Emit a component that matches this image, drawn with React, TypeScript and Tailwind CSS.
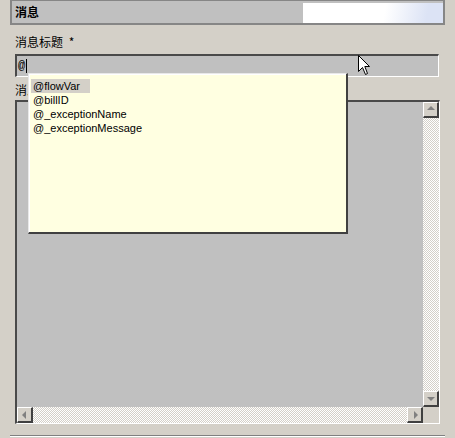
import React from "react";

const cjk = { fontFamily: '"Noto Sans CJK SC", "Liberation Sans", sans-serif' };
const latin = { fontFamily: '"Liberation Sans", Arial, sans-serif' };

function Arrow({ dir }: { dir: "up" | "down" | "left" | "right" }) {
  const pts = {
    up: "4,8 8,4 12,8",
    down: "4,6 12,6 8,10",
    left: "9,4 9,12 5,8",
    right: "7,4 7,12 11,8",
  }[dir];
  return (
    <svg width="12" height="12" viewBox="2 2 12 12">
      <polygon points={pts} fill="#808080" />
    </svg>
  );
}

function SBtn({ dir }: { dir: "up" | "down" | "left" | "right" }) {
  return (
    <div className="w-[16px] h-[16px] flex items-center justify-center bg-[#d4d0c8] border-t border-l border-t-white border-l-white border-b-2 border-r-2 border-b-[#404040] border-r-[#404040]">
      <Arrow dir={dir} />
    </div>
  );
}

const track =
  "bg-[repeating-conic-gradient(#d4d0c8_0%_25%,#ffffff_0%_50%)] bg-[length:2px_2px]";

export default function App() {
  const items = ["@flowVar", "@billID", "@_exceptionName", "@_exceptionMessage"];
  return (
    <div className="relative w-[455px] h-[438px] bg-[#d4d0c8] overflow-hidden">
      {/* header */}
      <div className="mx-[10px] h-[25px] border-t border-l-2 border-r-2 border-b-2 border-[#868686] bg-[#c0c0c0] flex items-center justify-between">
        <span className="pl-[3px] text-[12px] font-bold text-black leading-none" style={cjk}>
          消息
        </span>
        <div className="w-[140px] h-[20px] mt-[1px] bg-[linear-gradient(100deg,#ffffff_58%,#dce3f5_88%)]" />
      </div>

      {/* label */}
      <div className="mt-[9px] ml-[15px] h-[16px] leading-[16px] text-[12px] text-black" style={cjk}>
        消息标题 <span className="ml-[3px]">*</span>
      </div>

      {/* input */}
      <div className="mt-[4px] ml-[15px] w-[424px] h-[23px] bg-[#c0c0c0] border-t-2 border-l-2 border-t-[#4a4a4a] border-l-[#4a4a4a] border-b border-r border-b-white border-r-white flex items-center">
        <span className="pl-[1px] text-[12px] text-black leading-none" style={{ fontFamily: '"Liberation Mono", monospace' }}>
          @
        </span>
        <span className="ml-[1px] w-px h-[14px] bg-black" />
      </div>

      {/* second label */}
      <div className="mt-[5px] ml-[15px] h-[16px] leading-[16px] text-[12px] text-black" style={cjk}>
        消息内容
      </div>

      {/* textarea */}
      <div className="mt-[2px] ml-[15px] w-[425px] h-[324px] border-t-2 border-l-2 border-t-[#4a4a4a] border-l-[#4a4a4a] border-b border-r border-b-white border-r-white grid grid-cols-[1fr_16px] grid-rows-[1fr_16px]">
        <div className="bg-[#c0c0c0]" />
        <div className={`flex flex-col justify-between ${track}`}>
          <SBtn dir="up" />
          <SBtn dir="down" />
        </div>
        <div className={`flex justify-between ${track}`}>
          <SBtn dir="left" />
          <SBtn dir="right" />
        </div>
        <div className="bg-[#d4d0c8]" />
      </div>

      {/* bottom separator */}
      <div className="mt-[11px] mx-[10px] h-[2px] border-t border-[#808080] bg-white" />

      {/* autocomplete popup */}
      <div className="absolute left-[28px] top-[73px] w-[320px] h-[161px] bg-[#ffffe1] border-t border-l border-t-[#e8e8e8] border-l-[#e8e8e8] border-b-2 border-r-2 border-b-[#404040] border-r-[#404040] shadow-[inset_1px_1px_#ffffff] pt-[3px] pl-[2px]">
        {items.map((it, i) => (
          <div key={it} className="h-[14px] leading-[14px]">
            <span
              className={`inline-block px-[2px] text-[11px] text-black ${i === 0 ? "bg-[#d4d0c8] pr-[10px]" : ""}`}
              style={latin}
            >
              {it}
            </span>
          </div>
        ))}
      </div>

      {/* mouse cursor */}
      <svg className="absolute left-[358px] top-[55px]" width="13" height="21" viewBox="0 0 13 21">
        <path
          d="M0.5 0.5 L0.5 16.5 L4.5 12.5 L7.5 19.5 L9.5 18.5 L6.8 11.5 L11.5 11.5 Z"
          fill="#ffffff"
          stroke="#000000"
          strokeWidth="1"
        />
      </svg>
    </div>
  );
}
